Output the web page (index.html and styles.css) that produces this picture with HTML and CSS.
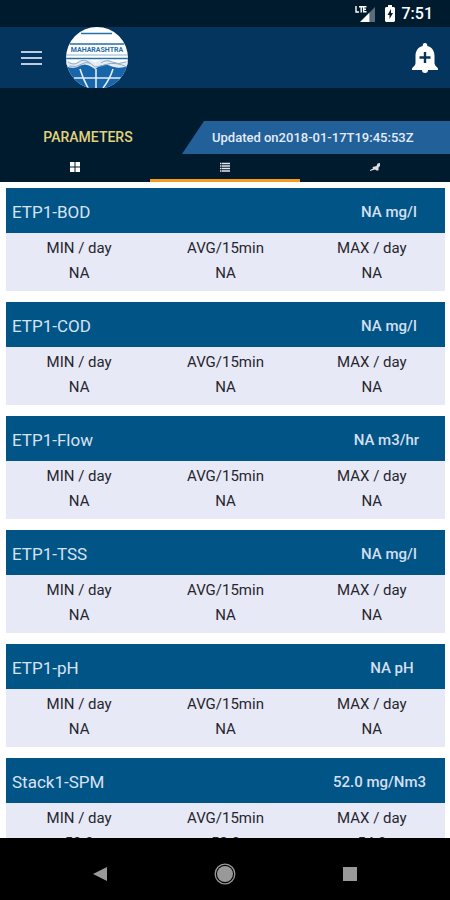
FILE: index.html
```html
<!DOCTYPE html>
<html lang="en">
<head>
    <meta charset="UTF-8">
    <meta name="viewport" content="width=device-width, initial-scale=1.0">
    <title>Parameters</title>
    <link rel="stylesheet" href="styles.css">
</head>
<body>
    <div class="status-bar">
        <svg class="signal" viewBox="0 0 20 16" role="img" aria-label="LTE signal">
            <path d="M1 0V6H4M4 0.8H8.5M6.2 0.8V6.5M11.5 0.8H8.6V5.7H11.5M8.6 3.2H11" fill="none" stroke="#fff" stroke-width="1.4"/>
            <path d="M14.500 6.500L20 1V16H14.500Z" fill="#5a6b7b"/>
            <path d="M5 16L14.500 6.500V16Z" fill="#fff"/>
        </svg>
        <svg class="battery" viewBox="0 0 10 17" role="img" aria-label="Battery charging">
            <path d="M3 0H7V2H9L10 3V16L9 17H1L0 16V3L1 2H3Z" fill="#fff"/>
            <path d="M6 4L2.500 10H4.500V14L8 8H6Z" fill="#001a2e"/>
        </svg>
        <span class="clock">7:51</span>
    </div>
    <header class="app-bar">
        <button class="menu" aria-label="Menu">
            <svg viewBox="0 0 22 16"><path d="M1 2H22M1 8H22M1 14H22" stroke="#bfcbe0" stroke-width="2"/></svg>
        </button>
        <svg class="logo" viewBox="0 0 62 62" role="img" aria-label="Maharashtra">
            <clipPath id="disc"><circle cx="31" cy="31" r="31"/></clipPath>
            <g clip-path="url(#disc)">
                <rect width="62" height="62" fill="#fff"/>
                <path d="M15 6.500H46M4 17H58M0 31.500H62" stroke="#266fa9" stroke-width="1.600"/>
                <path d="M0 28H62" stroke="#8ab2d2" stroke-width="1"/>
                <text x="31" y="25" text-anchor="middle" class="logo-text">MAHARASHTRA</text>
                <path d="M0 38Q6 42 12 39Q20 34 29 41Q38 34 46 39Q54 42 62 38V62H0Z" fill="#1766ab"/>
                <path d="M0 36Q6 40 12 37Q20 32 29 39Q38 32 46 37Q54 40 62 36" fill="none" stroke="#e4edf5" stroke-width="5"/>
                <path d="M2 35Q8 39 13 35T24 36M35 36Q40 32 46 35T60 35M3 39Q10 41 16 37T29 40Q36 39 42 37T59 39" fill="none" stroke="#8fa9bd" stroke-width="1"/>
                <path d="M8 51H55M30 42V62M14 42Q17 52 22 61M47 42Q44 52 37 61" fill="none" stroke="#e4edf5" stroke-width="1.600"/>
            </g>
        </svg>
        <button class="alerts" aria-label="Add alert">
            <svg viewBox="0 0 28 32">
                <path d="M14 1C12.300 1 11.700 2 11.700 4C7 5 4.500 9 4.500 14V21C4.500 24 1 25 1 27V28H27V27C27 25 23.500 24 23.500 21V14C23.500 9 21 5 16.300 4C16.300 2 15.700 1 14 1Z" fill="#fff"/>
                <path d="M11 28A3 3 0 0 0 17 28Z" fill="#fff"/>
                <path d="M14 10V21M8.500 15.500H19.500" stroke="#03355f" stroke-width="2.400"/>
            </svg>
        </button>
    </header>
    <section class="title-row">
        <h1>PARAMETERS</h1>
        <p class="updated">Updated on2018-01-17T19:45:53Z</p>
    </section>
    <nav class="tabs">
        <button aria-label="Grid">
            <svg viewBox="0 0 12 12"><path d="M1 1H5.500V5.500H1ZM6.500 1H11V5.500H6.500ZM1 6.500H5.500V11H1ZM6.500 6.500H11V11H6.500Z" fill="#fff"/></svg>
        </button>
        <button class="active" aria-label="List">
            <svg viewBox="0 0 12 12"><path d="M1 2.500H2.500M3 2.500H11M1 5H2.500M3 5H11M1 7.500H2.500M3 7.500H11M1 10H2.500M3 10H11" stroke="#e6e6ec" stroke-width="1.300"/></svg>
        </button>
        <button aria-label="Pinned">
            <svg viewBox="0 0 12 12"><path d="M8.500 2.500L11 2V5L9.500 6.500V9.500H7.500L6 8.500L1 10V9L4 7.500L3.500 6L7.500 5Z" fill="#dcdce2"/></svg>
        </button>
    </nav>
    <main class="card-list" id="cardList"></main>
    <footer class="nav-bar">
        <button aria-label="Back"><svg viewBox="0 0 22 22"><path d="M4 11L18 4V18Z" fill="#999"/></svg></button>
        <button aria-label="Home"><svg viewBox="0 0 22 22"><circle cx="11" cy="11" r="9.800" fill="none" stroke="#999" stroke-width="1.300"/><circle cx="11" cy="11" r="8" fill="#999"/></svg></button>
        <button aria-label="Recent apps"><svg viewBox="0 0 22 22"><rect x="4" y="4" width="14" height="14" fill="#999"/></svg></button>
    </footer>
    <script>
        const parameters = [
            { name: "ETP1-BOD", value: "NA mg/l", min: "NA", avg: "NA", max: "NA" },
            { name: "ETP1-COD", value: "NA mg/l", min: "NA", avg: "NA", max: "NA" },
            { name: "ETP1-Flow", value: "NA m3/hr", min: "NA", avg: "NA", max: "NA" },
            { name: "ETP1-TSS", value: "NA mg/l", min: "NA", avg: "NA", max: "NA" },
            { name: "ETP1-pH", value: "NA pH", min: "NA", avg: "NA", max: "NA" },
            { name: "Stack1-SPM", value: "52.0 mg/Nm3", min: "50.0", avg: "52.0", max: "54.0" }
        ];
        const cardList = document.getElementById("cardList");
        parameters.forEach(function(item) {
            const card = document.createElement("article");
            card.className = "card";
            card.innerHTML = `
                <div class="card-header">
                    <h2>${item.name}</h2>
                    <div class="reading"><span>${item.value}</span></div>
                </div>
                <table>
                    <thead>
                        <tr><th>MIN / day</th><th>AVG/15min</th><th>MAX / day</th></tr>
                    </thead>
                    <tbody>
                        <tr><td>${item.min}</td><td>${item.avg}</td><td>${item.max}</td></tr>
                    </tbody>
                </table>
            `;
            cardList.appendChild(card);
        });
    </script>
</body>
</html>
```
FILE: styles.css
```css
* {
    margin: 0;
    padding: 0;
    box-sizing: border-box;
}
body {
    display: flex;
    flex-direction: column;
    height: 100vh;
    overflow: hidden;
    font-family: Roboto, "Liberation Sans", sans-serif;
    background-color: #fff;
    color: #26262e;
}
button {
    display: flex;
    align-items: center;
    justify-content: center;
    border: none;
    background: none;
    cursor: pointer;
}
svg {
    display: block;
}
.status-bar {
    display: flex;
    flex-shrink: 0;
    align-items: center;
    justify-content: flex-end;
    height: 27px;
    padding-right: 17px;
    background-color: #001a2e;
    color: #fff;
}
.signal {
    width: 20px;
    height: 16px;
}
.battery {
    width: 10px;
    height: 17px;
    margin: 0 7px 0 10px;
}
.clock {
    font-size: 16px;
    font-weight: 500;
}
.app-bar {
    display: flex;
    flex-shrink: 0;
    align-items: center;
    height: 61px;
    padding: 0 11px 0 20px;
    background-color: #03355f;
}
.menu svg {
    width: 22px;
    height: 16px;
}
.logo {
    width: 62px;
    height: 62px;
    margin-left: 24px;
}
.logo-text {
    font-size: 7px;
    font-weight: 700;
    fill: #2a6da5;
}
.alerts {
    margin-left: auto;
}
.alerts svg {
    width: 28px;
    height: 32px;
}
.title-row {
    display: flex;
    flex-shrink: 0;
    padding-top: 33px;
    background-color: #001a2e;
}
.title-row h1 {
    flex: 1;
    padding-right: 6px;
    font-size: 14px;
    font-weight: 500;
    line-height: 33px;
    text-align: center;
    color: #e3d27c;
}
.updated {
    width: 268px;
    padding-left: 30px;
    background-color: #216099;
    clip-path: polygon(22px 0, 100% 0, 100% 100%, 0 100%);
    font-size: 13px;
    font-weight: 500;
    line-height: 33px;
    color: #e4ebf7;
}
.tabs {
    display: flex;
    flex-shrink: 0;
    height: 28px;
    background-color: #001a2e;
}
.tabs button {
    flex: 1;
    border-bottom: 3px solid transparent;
}
.tabs .active {
    border-bottom-color: #f39c1f;
}
.tabs svg {
    width: 12px;
    height: 12px;
}
.card-list {
    flex: 1;
    min-height: 0;
    overflow: hidden;
    padding: 6px 5px 0 6px;
}
.card {
    margin-bottom: 11px;
    background-color: #e8e9f6;
}
.card-header {
    display: flex;
    align-items: center;
    height: 45px;
    padding: 2px 0 0 6px;
    background-color: #015586;
}
.card-header h2 {
    flex: 1;
    font-size: 17px;
    font-weight: 400;
    color: #d9e2f3;
}
.reading {
    display: flex;
    width: 39%;
    font-size: 15px;
    font-weight: 500;
    color: #d5dff0;
}
.reading::before {
    content: "";
    flex: 3;
}
.reading::after {
    content: "";
    flex: 1;
}
table {
    width: 100%;
    height: 58px;
    padding: 3px 0 5px;
    border-spacing: 0;
    table-layout: fixed;
}
th, td {
    font-size: 15px;
    font-weight: 400;
    line-height: 25px;
    text-align: center;
}
.nav-bar {
    display: flex;
    flex-shrink: 0;
    align-items: center;
    justify-content: center;
    gap: 103px;
    height: 62px;
    padding-top: 10px;
    background-color: #000;
}
.nav-bar svg {
    width: 22px;
    height: 22px;
}
```
